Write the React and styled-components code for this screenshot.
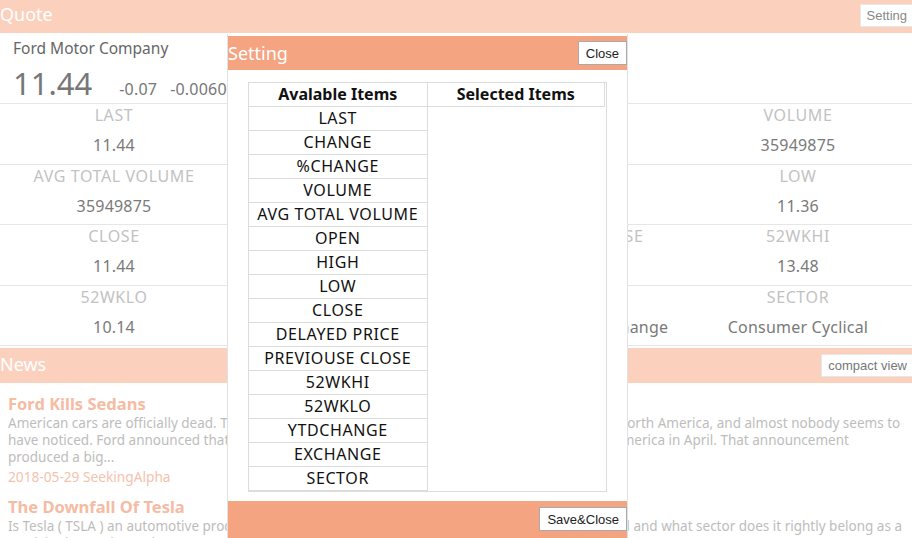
import styled, { createGlobalStyle } from "styled-components";

const GlobalStyle = createGlobalStyle`
  html, body {
    margin: 0;
    padding: 0;
    overflow: hidden;
    background: #fff;
  }
  body {
    font-family: "Noto Sans", "Liberation Sans", sans-serif;
  }
  * {
    box-sizing: border-box;
  }
`;

const Page = styled.div`
  position: relative;
  width: 912px;
  height: 538px;
  overflow: hidden;
`;

const Bar = styled.div`
  display: flex;
  justify-content: space-between;
  align-items: flex-start;
  height: ${(props) => props.h}px;
  background-color: #fbd1be;
`;

const BarTitle = styled.div`
  color: #fff;
  font-size: 18px;
  line-height: 28px;
  margin-top: ${(props) => props.mt || 0}px;
`;

const SmallButton = styled.button`
  height: 23px;
  margin: ${(props) => props.mt || 0}px 0 0 0;
  padding: 0 5px 0 6px;
  background: #fff;
  border: 1px solid #e8e8e8;
  border-right: none;
  color: ${(props) => props.color || "#888"};
  font-family: "Liberation Sans", Arial, sans-serif;
  font-size: 13px;
  cursor: pointer;
`;

const QuoteInfo = styled.div`
  height: 70px;
  padding: 5px 13px 0;
`;

const Company = styled.div`
  font-size: 15.5px;
  line-height: 20px;
  color: #666;
`;

const PriceRow = styled.div`
  display: flex;
  align-items: baseline;
  gap: 13px;
  margin-top: 4px;
`;

const Price = styled.span`
  font-size: 31px;
  line-height: 42px;
  color: #777;
  margin-right: 14px;
`;

const Change = styled.span`
  font-size: 16px;
  letter-spacing: 0.2px;
  color: #777;
`;

const Grid = styled.div`
  display: grid;
  grid-template-columns: repeat(4, 1fr);
  border-bottom: 1px solid #e6e6e6;
`;

const Cell = styled.div`
  display: flex;
  flex-direction: column;
  align-items: center;
  height: 60.5px;
  border-top: 1px solid #e6e6e6;
  white-space: nowrap;
`;

const Label = styled.div`
  font-size: 16px;
  line-height: 22px;
  letter-spacing: 0.6px;
  color: #c2c2c2;
`;

const Value = styled.div`
  font-size: 16px;
  line-height: 24px;
  letter-spacing: 0.2px;
  margin-top: 7px;
  color: #7a7a7a;
`;

const News = styled.div`
  margin-top: 2px;
`;

const NewsList = styled.div`
  padding: 10px 4px 0 8px;
`;

const NewsItem = styled.div`
  margin-bottom: 9px;
`;

const NewsTitle = styled.div`
  font-size: 16.5px;
  font-weight: 700;
  line-height: 22px;
  color: #f5bba3;
`;

const Summary = styled.div`
  font-size: 13.5px;
  line-height: 17px;
  color: #bdbdbd;
`;

const Meta = styled.div`
  font-size: 13.7px;
  line-height: 20px;
  margin-top: 1px;
  color: #f5c2ad;
`;

const Modal = styled.div`
  position: absolute;
  left: 227px;
  top: 34px;
  width: 401px;
  padding-top: 2px;
  background: #fff;
  border-left: 1px solid #e2e2e2;
  border-right: 1px solid #e2e2e2;
`;

const ModalHeader = styled.div`
  display: flex;
  justify-content: space-between;
  align-items: flex-start;
  height: 34px;
  padding-top: 5px;
  background-color: #f5a482;
`;

const ModalTitle = styled.div`
  color: #fff;
  font-size: 18px;
  line-height: 24px;
`;

const ModalButton = styled.button`
  height: 24px;
  margin: 0;
  padding: 0 7px;
  background: #fff;
  border: 1px solid #aaa;
  color: #222;
  font-family: "Liberation Sans", Arial, sans-serif;
  font-size: 13px;
  cursor: pointer;
`;

const ModalBody = styled.div`
  height: 431px;
  padding: 12px 20px 0 20px;
`;

const Picker = styled.div`
  display: flex;
  width: 359px;
  border: 1px solid #dcdcdc;
`;

const Column = styled.div`
  display: flex;
  flex-direction: column;
  width: ${(props) => props.w}px;
  padding-right: ${(props) => props.pr || 0}px;
`;

const HeadCell = styled.div`
  height: 24px;
  border-right: 1px solid #dcdcdc;
  border-bottom: 1px solid #dcdcdc;
  font-size: 16px;
  font-weight: 700;
  line-height: 23px;
  text-align: center;
  color: #111;
`;

const ItemCell = styled.div`
  height: 24px;
  border-right: 1px solid #dcdcdc;
  border-bottom: 1px solid #dcdcdc;
  font-size: 16px;
  line-height: 23px;
  letter-spacing: 0.6px;
  text-align: center;
  color: #111;
  white-space: nowrap;
`;

const ModalFooter = styled.div`
  display: flex;
  justify-content: flex-end;
  height: 42px;
  padding-top: 6px;
  background-color: #f5a482;
`;

const fields = [
  ["LAST", "11.44"],
  ["CHANGE", "-0.07"],
  ["%CHANGE", "-0.0060"],
  ["VOLUME", "35949875"],
  ["AVG TOTAL VOLUME", "35949875"],
  ["OPEN", "11.5"],
  ["HIGH", "11.52"],
  ["LOW", "11.36"],
  ["CLOSE", "11.44"],
  ["DELAYED PRICE", "11.44"],
  ["PREVIOUSE CLOSE", "11.51"],
  ["52WKHI", "13.48"],
  ["52WKLO", "10.14"],
  ["YTDCHANGE", "-0.08"],
  ["EXCHANGE", "New York Stock Exchange"],
  ["SECTOR", "Consumer Cyclical"],
];

const news = [
  {
    title: "Ford Kills Sedans",
    text:
      "American cars are officially dead. The Ford Motor Company has chosen to stop selling sedans in North America, and almost nobody seems to have noticed. Ford announced that it will phase out all of its traditional passenger cars in North America in April. That announcement produced a big...",
    meta: "2018-05-29 SeekingAlpha",
  },
  {
    title: "The Downfall Of Tesla",
    text:
      "Is Tesla ( TSLA ) an automotive producer or a technology company? This question has been argued and what sector does it rightly belong as a stock in the market today...",
    meta: "2018-05-28 SeekingAlpha",
  },
];

const App = () => {
  return (
    <Page>
      <GlobalStyle />
      <Bar h={33}>
        <BarTitle>Quote</BarTitle>
        <SmallButton mt={4}>Setting</SmallButton>
      </Bar>
      <QuoteInfo>
        <Company>Ford Motor Company</Company>
        <PriceRow>
          <Price>11.44</Price>
          <Change>-0.07</Change>
          <Change>-0.0060</Change>
        </PriceRow>
      </QuoteInfo>
      <Grid>
        {fields.map(([label, value]) => (
          <Cell key={label}>
            <Label>{label}</Label>
            <Value>{value}</Value>
          </Cell>
        ))}
      </Grid>
      <News>
        <Bar h={35}>
          <BarTitle mt={2}>News</BarTitle>
          <SmallButton mt={6} color="#777">
            compact view
          </SmallButton>
        </Bar>
        <NewsList>
          {news.map((n) => (
            <NewsItem key={n.title}>
              <NewsTitle>{n.title}</NewsTitle>
              <Summary>{n.text}</Summary>
              <Meta>{n.meta}</Meta>
            </NewsItem>
          ))}
        </NewsList>
      </News>

      <Modal>
        <ModalHeader>
          <ModalTitle>Setting</ModalTitle>
          <ModalButton>Close</ModalButton>
        </ModalHeader>
        <ModalBody>
          <Picker>
            <Column w={179}>
              <HeadCell>Avalable Items</HeadCell>
              {fields.map(([label]) => (
                <ItemCell key={label}>{label}</ItemCell>
              ))}
            </Column>
            <Column w={179} pr={1}>
              <HeadCell>Selected Items</HeadCell>
            </Column>
          </Picker>
        </ModalBody>
        <ModalFooter>
          <ModalButton>Save&amp;Close</ModalButton>
        </ModalFooter>
      </Modal>
    </Page>
  );
};

export default App;
